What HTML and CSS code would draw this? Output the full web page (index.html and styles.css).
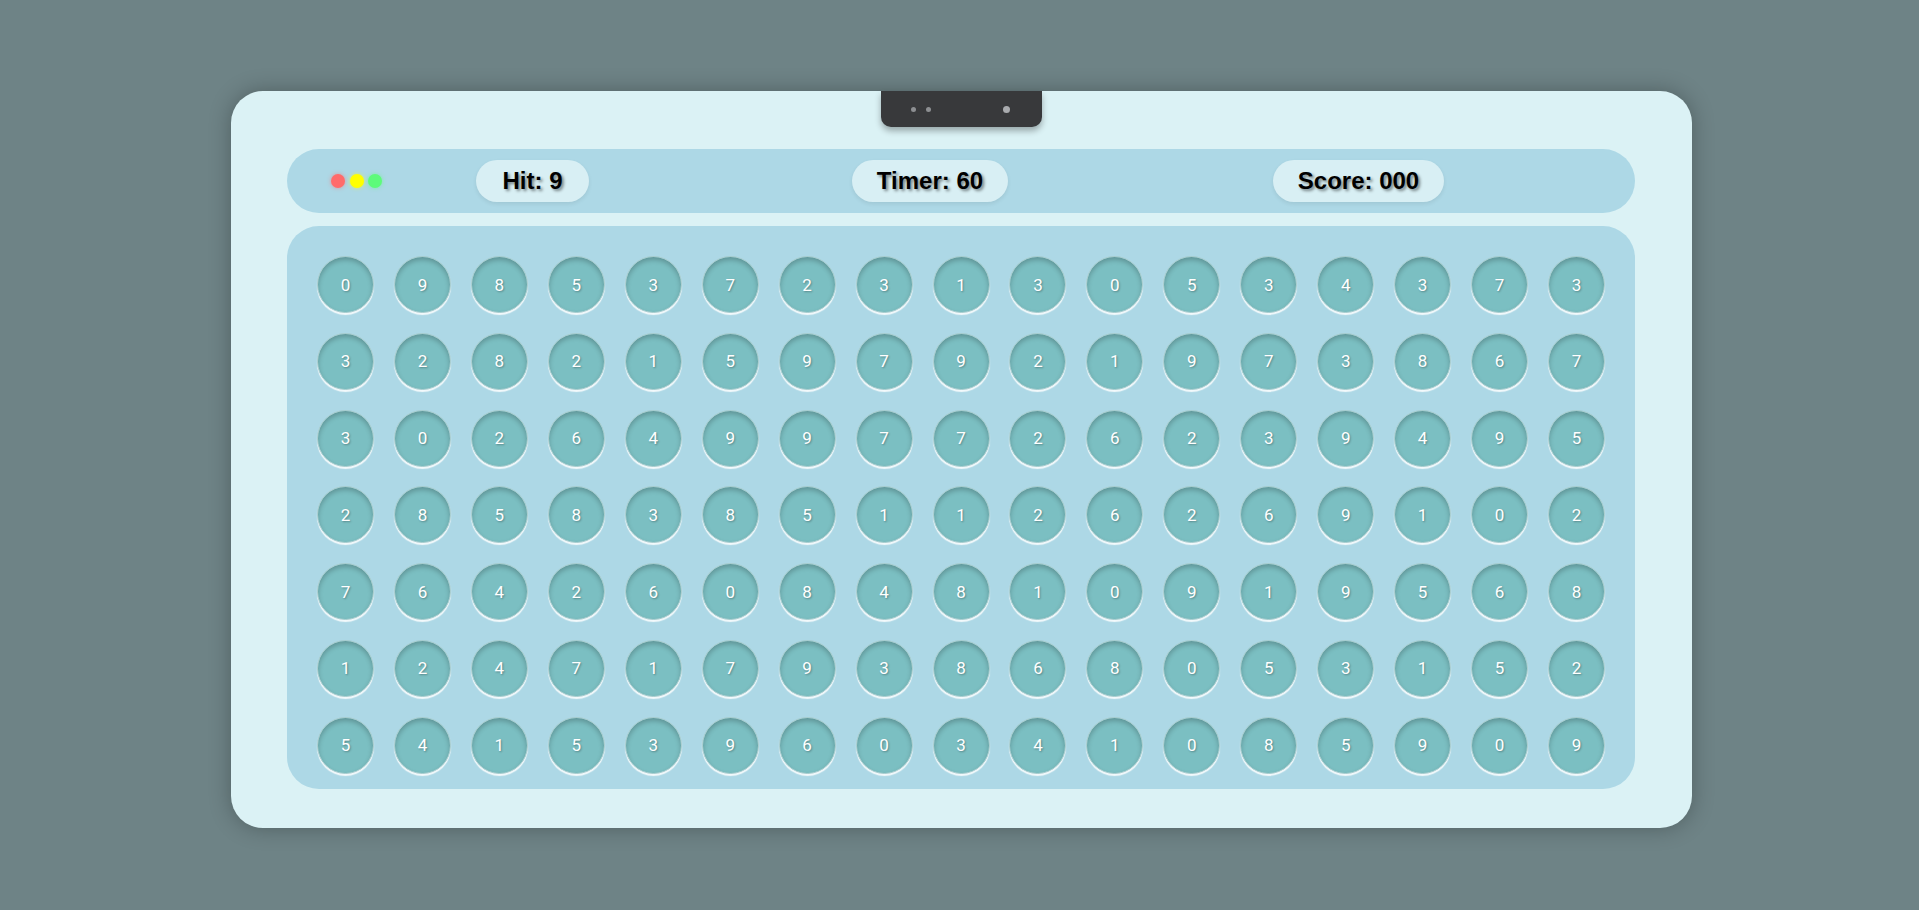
FILE: index.html
```html
<!DOCTYPE html>
<html lang="en">
<head>
<meta charset="utf-8">
<title>Whack Numbers</title>
<link rel="stylesheet" href="styles.css">
</head>
<body>
<div class="device">
  <div class="notch">
    <span class="cam cam-sm"></span>
    <span class="cam cam-sm"></span>
    <span class="cam cam-lg"></span>
  </div>
  <div class="topbar">
    <div class="lights">
      <span class="light red"></span>
      <span class="light yellow"></span>
      <span class="light green"></span>
    </div>
    <div class="pill pill-hit">Hit: 9</div>
    <div class="pill pill-timer">Timer: 60</div>
    <div class="pill pill-score">Score: 000</div>
  </div>
  <div class="board">
    <div class="hole">0</div><div class="hole">9</div><div class="hole">8</div><div class="hole">5</div><div class="hole">3</div><div class="hole">7</div><div class="hole">2</div><div class="hole">3</div><div class="hole">1</div><div class="hole">3</div><div class="hole">0</div><div class="hole">5</div><div class="hole">3</div><div class="hole">4</div><div class="hole">3</div><div class="hole">7</div><div class="hole">3</div>
    <div class="hole">3</div><div class="hole">2</div><div class="hole">8</div><div class="hole">2</div><div class="hole">1</div><div class="hole">5</div><div class="hole">9</div><div class="hole">7</div><div class="hole">9</div><div class="hole">2</div><div class="hole">1</div><div class="hole">9</div><div class="hole">7</div><div class="hole">3</div><div class="hole">8</div><div class="hole">6</div><div class="hole">7</div>
    <div class="hole">3</div><div class="hole">0</div><div class="hole">2</div><div class="hole">6</div><div class="hole">4</div><div class="hole">9</div><div class="hole">9</div><div class="hole">7</div><div class="hole">7</div><div class="hole">2</div><div class="hole">6</div><div class="hole">2</div><div class="hole">3</div><div class="hole">9</div><div class="hole">4</div><div class="hole">9</div><div class="hole">5</div>
    <div class="hole">2</div><div class="hole">8</div><div class="hole">5</div><div class="hole">8</div><div class="hole">3</div><div class="hole">8</div><div class="hole">5</div><div class="hole">1</div><div class="hole">1</div><div class="hole">2</div><div class="hole">6</div><div class="hole">2</div><div class="hole">6</div><div class="hole">9</div><div class="hole">1</div><div class="hole">0</div><div class="hole">2</div>
    <div class="hole">7</div><div class="hole">6</div><div class="hole">4</div><div class="hole">2</div><div class="hole">6</div><div class="hole">0</div><div class="hole">8</div><div class="hole">4</div><div class="hole">8</div><div class="hole">1</div><div class="hole">0</div><div class="hole">9</div><div class="hole">1</div><div class="hole">9</div><div class="hole">5</div><div class="hole">6</div><div class="hole">8</div>
    <div class="hole">1</div><div class="hole">2</div><div class="hole">4</div><div class="hole">7</div><div class="hole">1</div><div class="hole">7</div><div class="hole">9</div><div class="hole">3</div><div class="hole">8</div><div class="hole">6</div><div class="hole">8</div><div class="hole">0</div><div class="hole">5</div><div class="hole">3</div><div class="hole">1</div><div class="hole">5</div><div class="hole">2</div>
    <div class="hole">5</div><div class="hole">4</div><div class="hole">1</div><div class="hole">5</div><div class="hole">3</div><div class="hole">9</div><div class="hole">6</div><div class="hole">0</div><div class="hole">3</div><div class="hole">4</div><div class="hole">1</div><div class="hole">0</div><div class="hole">8</div><div class="hole">5</div><div class="hole">9</div><div class="hole">0</div><div class="hole">9</div>
  </div>
</div>
</body>
</html>
```

FILE: styles.css
```css
* { box-sizing: border-box; }

html, body {
  margin: 0;
  padding: 0;
}

body {
  background: #6e8386;
  width: 1919px;
  height: 910px;
  overflow: hidden;
  font-family: "Liberation Sans", Arial, sans-serif;
}

.device {
  position: relative;
  width: 1461px;
  height: 737px;
  margin: 91px 0 0 231px;
  padding: 58px 57px 39px 56px;
  background: #dbf2f5;
  border-radius: 32px;
  box-shadow: 0 0 22px rgba(0, 0, 0, 0.28);
  display: flex;
  flex-direction: column;
}

.notch {
  position: absolute;
  top: 0;
  left: 650px;
  width: 161px;
  height: 36px;
  background: #38393b;
  border-radius: 0 0 10px 10px;
  box-shadow: 0 4px 6px rgba(0, 0, 0, 0.3);
  display: flex;
  align-items: center;
  padding-left: 30px;
}

.cam {
  display: block;
  border-radius: 50%;
  background: #8d8f92;
}

.cam-sm {
  width: 5px;
  height: 5px;
  margin-right: 10px;
}

.cam-lg {
  width: 7px;
  height: 7px;
  margin-left: 62px;
  background: #a9abae;
}

.topbar {
  height: 64px;
  flex: 0 0 64px;
  background: #add8e6;
  border-radius: 32px;
  display: flex;
  align-items: center;
  padding-left: 44px;
}

.lights {
  display: flex;
  gap: 4.5px;
  width: 51px;
}

.light {
  display: block;
  width: 14px;
  height: 14px;
  border-radius: 50%;
}

.red { background: #ff6b6b; box-shadow: 0 0 4px rgba(255, 107, 107, 0.6); }
.yellow { background: #ffff00; box-shadow: 0 0 4px rgba(255, 255, 0, 0.6); }
.green { background: #5dfb7a; box-shadow: 0 0 4px rgba(93, 251, 122, 0.6); }

.pill {
  height: 42px;
  border-radius: 21px;
  background: #d8eff4;
  display: flex;
  align-items: center;
  justify-content: center;
  font-weight: bold;
  font-size: 24px;
  color: #000;
  text-shadow: 2px 2px 3px rgba(0, 0, 0, 0.45);
  box-shadow: 0 2px 4px rgba(0, 0, 0, 0.08);
}

.pill-hit { width: 113px; margin-left: 94px; }
.pill-timer { width: 156px; margin-left: 263px; }
.pill-score { width: 171px; margin-left: 265px; }

.board {
  margin-top: 13px;
  flex: 1;
  background: #add8e6;
  border-radius: 32px;
  padding: 30px 30px 0 30px;
  display: grid;
  grid-template-columns: repeat(17, 57px);
  grid-auto-rows: 57px;
  justify-content: space-between;
  align-content: start;
  row-gap: 19.8px;
}

.hole {
  width: 57px;
  height: 57px;
  border-radius: 50%;
  background: #7bbfc2;
  border: 1px solid #a9cdcf;
  box-shadow: inset 0 3px 5px rgba(0, 0, 0, 0.22), 0 2px 1px rgba(255, 255, 255, 0.85);
  display: flex;
  align-items: center;
  justify-content: center;
  color: #ffffff;
  font-family: Roboto, "Liberation Sans", Arial, sans-serif;
  font-size: 17px;
  text-shadow: 1px 1px 2px rgba(0, 0, 0, 0.3);
}
```
